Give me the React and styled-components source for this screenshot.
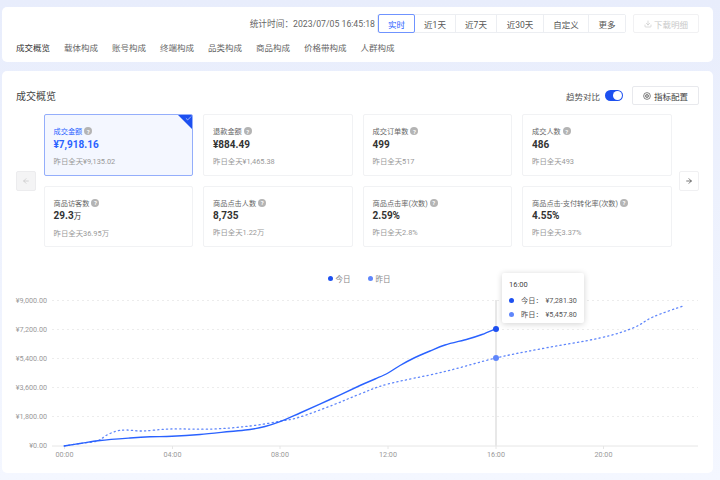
import React from "react"
import styled, { createGlobalStyle } from "styled-components"
import { ArrowLeft, ArrowRight, Check, Download } from "lucide-react"

const FONT = `Roboto, "Noto Sans CJK SC", sans-serif`

const GlobalStyle = createGlobalStyle`
  html, body {
    margin: 0;
    padding: 0;
  }
  body {
    width: 720px;
    height: 480px;
    overflow: hidden;
    font-family: ${FONT};
    background: linear-gradient(180deg, #e8edfc 0%, #f4f7ff 100%);
  }
`

const Page = styled.div`
  display: flex;
  flex-direction: column;
  gap: 9px;
  padding: 7px 7px 0 2px;
`

const Panel = styled.section`
  background: #fff;
  border-radius: 5px;
`

const FilterPanel = styled(Panel)`
  height: 55px;
  padding: 7px 14px 0 14px;
  box-sizing: border-box;
`

const FilterRow = styled.div`
  display: flex;
  align-items: center;
  justify-content: flex-end;
  height: 19px;
`

const StatTime = styled.span`
  font-size: 8.7px;
  color: #666;
  margin-right: 2px;
`

const Segments = styled.div`
  display: flex;
  height: 19px;
  border: 1px solid #eceef2;
  border-radius: 2px;
  box-sizing: border-box;
`

const Segment = styled.button`
  width: ${props => props.$width}px;
  padding: 0;
  margin: ${props => (props.$active ? "-1px 0" : "0")};
  font: 8.5px ${FONT};
  color: ${props => (props.$active ? "#2a62ff" : "#555")};
  background: #fff;
  border: ${props => (props.$active ? "1px solid #6f93ff" : "none")};
  border-right: ${props => (props.$active ? "1px solid #6f93ff" : "1px solid #eceef2")};
  border-radius: ${props => (props.$active ? "2px" : "0")};
  &:last-child {
    border-right: none;
  }
`

const DownloadButton = styled.button`
  display: flex;
  align-items: center;
  justify-content: center;
  gap: 2px;
  width: 66px;
  height: 19px;
  margin-left: 7px;
  padding: 0;
  font: 8.5px ${FONT};
  color: #c9c9c9;
  background: #fff;
  border: 1px solid #f1f1f3;
  border-radius: 2px;
`

const Tabs = styled.nav`
  display: flex;
  gap: 14px;
  margin-top: 9px;
`

const Tab = styled.span`
  font-size: 8.5px;
  line-height: 12px;
  color: ${props => (props.$active ? "#333" : "#666")};
`

const OverviewPanel = styled(Panel)`
  height: 402px;
  padding: 15px 14px 0 14px;
  box-sizing: border-box;
`

const OverviewHead = styled.div`
  display: flex;
  align-items: center;
  justify-content: space-between;
  height: 19px;
`

const Heading = styled.h2`
  margin: 0;
  font-size: 10px;
  font-weight: 400;
  color: #444;
`

const HeadActions = styled.div`
  display: flex;
  align-items: center;
`

const CompareLabel = styled.span`
  font-size: 8.5px;
  color: #555;
`

const Toggle = styled.span`
  display: flex;
  justify-content: flex-end;
  align-items: center;
  width: 18px;
  height: 11px;
  margin: 0 9px 0 5px;
  padding: 1px;
  box-sizing: border-box;
  background: #1d50f0;
  border-radius: 6px;
  &::after {
    content: "";
    width: 9px;
    height: 9px;
    border-radius: 50%;
    background: #fff;
  }
`

const ConfigButton = styled.button`
  display: flex;
  align-items: center;
  justify-content: center;
  gap: 3px;
  width: 67px;
  height: 19px;
  padding: 0;
  font: 8.5px ${FONT};
  color: #444;
  background: #fff;
  border: 1px solid #e8e9ed;
  border-radius: 2px;
`

const Carousel = styled.div`
  display: flex;
  align-items: center;
  gap: 7.5px;
  margin-top: 9px;
`

const ArrowButton = styled.button`
  flex: none;
  display: flex;
  align-items: center;
  justify-content: center;
  width: 20px;
  height: 20px;
  padding: 0;
  color: ${props => (props.disabled ? "#c4c4c4" : "#333")};
  background: ${props => (props.disabled ? "#f4f4f5" : "#fff")};
  border: 1px solid ${props => (props.disabled ? "#ececee" : "#f0f0f2")};
  border-radius: 2px;
`

const MetricGrid = styled.div`
  flex: 1;
  display: grid;
  grid-template-columns: repeat(4, 1fr);
  grid-auto-rows: 61.5px;
  gap: 10px;
`

const MetricCard = styled.div`
  position: relative;
  padding: 11px 9px 0;
  box-sizing: border-box;
  background: ${props => (props.$active ? "#f4f7ff" : "#fff")};
  border: 1px solid ${props => (props.$active ? "#94aefb" : "#f1f2f4")};
  border-radius: 2px;
  overflow: hidden;
`

const CornerMark = styled.span`
  position: absolute;
  top: 0;
  right: 0;
  width: 14px;
  height: 14px;
  background: #1d50f0;
  clip-path: polygon(0 0, 100% 0, 100% 100%);
  color: #fff;
  & svg {
    position: absolute;
    top: 0;
    right: 0;
  }
`

const MetricTitle = styled.div`
  display: flex;
  align-items: center;
  gap: 2px;
  height: 10px;
  font-size: 7.2px;
  white-space: nowrap;
  color: ${props => (props.$active ? "#2a62ff" : "#666")};
`

const HelpDot = styled.span`
  display: inline-flex;
  align-items: center;
  justify-content: center;
  width: 8px;
  height: 8px;
  border-radius: 50%;
  font-size: 6px;
  font-weight: 700;
  color: #fff;
  background: #b4b4b4;
`

const MetricValue = styled.div`
  margin-top: 1.5px;
  font-size: 10px;
  line-height: 14px;
  font-weight: 700;
  color: ${props => (props.$active ? "#2a62ff" : "#333")};
`

const Unit = styled.span`
  font-size: 7.5px;
  font-weight: 400;
`

const MetricCompare = styled.div`
  margin-top: 5px;
  font-size: 7.4px;
  line-height: 10px;
  color: #999;
`

const ChartArea = styled.div`
  position: relative;
  margin: 25px -14px 0 -16px;
`

const Legend = styled.div`
  display: flex;
  justify-content: center;
  gap: 17px;
  height: 12px;
  padding: 1px 0 0 5px;
  box-sizing: border-box;
`

const LegendItem = styled.span`
  display: flex;
  align-items: center;
  gap: 3px;
  font-size: 7.5px;
  color: #888;
`

const Dot = styled.i`
  display: block;
  flex: none;
  width: 5px;
  height: 5px;
  border-radius: 50%;
  background: ${props => props.$color};
`

const Tooltip = styled.div`
  position: absolute;
  left: 502px;
  top: 1px;
  width: 82px;
  height: 50px;
  padding: 6px 7px 0;
  box-sizing: border-box;
  background: #fff;
  border-radius: 2px;
  box-shadow: 0 1px 6px rgba(0, 0, 0, 0.18);
`

const TooltipTime = styled.div`
  font-size: 7.5px;
  line-height: 11px;
  color: #444;
  margin-bottom: 3px;
`

const TooltipRow = styled.div`
  display: flex;
  align-items: center;
  height: 14px;
  font-size: 7.2px;
  color: #555;
  white-space: nowrap;
`

const TooltipLabel = styled.span`
  margin: 0 3px 0 7px;
`

const AxisLabel = styled.text`
  font-family: ${FONT};
  font-size: 7.2px;
  fill: #999;
`

const metrics = [
  { title: "成交金额", value: "¥7,918.16", compare: "昨日全天¥9,135.02", active: true },
  { title: "退款金额", value: "¥884.49", compare: "昨日全天¥1,465.38" },
  { title: "成交订单数", value: "499", compare: "昨日全天517" },
  { title: "成交人数", value: "486", compare: "昨日全天493" },
  { title: "商品访客数", value: "29.3", unit: "万", compare: "昨日全天36.95万" },
  { title: "商品点击人数", value: "8,735", compare: "昨日全天1.22万" },
  { title: "商品点击率(次数)", value: "2.59%", compare: "昨日全天2.8%" },
  { title: "商品点击-支付转化率(次数)", value: "4.55%", compare: "昨日全天3.37%" },
]

const ranges = [
  { label: "实时", width: 37, active: true },
  { label: "近1天", width: 41 },
  { label: "近7天", width: 41 },
  { label: "近30天", width: 47 },
  { label: "自定义", width: 45 },
  { label: "更多", width: 36 },
]

const tabs = ["成交概览", "载体构成", "账号构成", "终端构成", "品类构成", "商品构成", "价格带构成", "人群构成"]

const TODAY = "#1d50f0"
const YESTERDAY = "#5f86fb"

// chart coordinates are page x, and y minus the svg top (284)
const OFFSET_Y = 284

// smooth line through the points (catmull-rom to bezier)
const toPath = list => {
  const pts = list.map(([x, y]) => [x, y - OFFSET_Y])
  let d = `M${pts[0][0]},${pts[0][1]}`
  for (let i = 0; i < pts.length - 1; i++) {
    const p0 = pts[i - 1] || pts[i]
    const p1 = pts[i]
    const p2 = pts[i + 1]
    const p3 = pts[i + 2] || p2
    const c1x = p1[0] + (p2[0] - p0[0]) / 6
    const c1y = p1[1] + (p2[1] - p0[1]) / 6
    const c2x = p2[0] - (p3[0] - p1[0]) / 6
    const c2y = p2[1] - (p3[1] - p1[1]) / 6
    d += ` C${c1x},${c1y} ${c2x},${c2y} ${p2[0]},${p2[1]}`
  }
  return d
}

const todayLine = [
  [64, 446], [80, 443.5], [100, 440.5], [130, 438], [150, 436.8], [172, 436.3], [200, 434.5], [230, 431.5],
  [250, 429.5], [265, 426.5], [280, 421.7], [300, 413], [330, 399.5], [360, 385.5], [375, 379], [388, 373],
  [400, 365.5], [414, 358], [430, 351], [445, 345], [468, 339], [482, 334.5], [496, 328.7],
]

const yesterdayLine = [
  [64, 446], [80, 443.5], [97, 441], [107, 435], [117, 431], [127, 430], [143, 431], [170, 429], [213, 429],
  [250, 426], [280, 421.3], [300, 417], [333, 405], [360, 394], [388, 384], [443, 372], [496, 358], [540, 349],
  [600, 338], [633, 328], [653, 317], [683, 306],
]

const yTicks = [
  { label: "¥9,000.00", y: 300.5 },
  { label: "¥7,200.00", y: 329.5 },
  { label: "¥5,400.00", y: 358.5 },
  { label: "¥3,600.00", y: 387.5 },
  { label: "¥1,800.00", y: 416.5 },
]

const xTicks = [
  { label: "00:00", x: 64.5 },
  { label: "04:00", x: 172.5 },
  { label: "08:00", x: 280 },
  { label: "12:00", x: 388 },
  { label: "16:00", x: 496 },
  { label: "20:00", x: 603.5 },
]

const SettingIcon = () => (
  <svg width="8" height="8" viewBox="0 0 18 18" fill="none" stroke="#555" strokeWidth="1.6">
    <circle cx="9" cy="9" r="7.6" />
    <path d="M9 5.2 12.3 7.1V10.9L9 12.8 5.7 10.9V7.1Z" />
    <circle cx="9" cy="9" r="1" />
  </svg>
)

const TrendChart = () => (
  <svg width="720" height="180" viewBox="0 0 720 180" style={{ display: "block" }}>
    {yTicks.map(tick => (
      <g key={tick.label}>
        <AxisLabel x="47" y={tick.y - OFFSET_Y + 2.5} textAnchor="end">{tick.label}</AxisLabel>
        <line x1="52" x2="698" y1={tick.y - OFFSET_Y} y2={tick.y - OFFSET_Y} stroke="#ececec" strokeDasharray="2 3" />
      </g>
    ))}
    <AxisLabel x="47" y={448 - OFFSET_Y} textAnchor="end">¥0.00</AxisLabel>
    <line x1="52" x2="698" y1={446 - OFFSET_Y} y2={446 - OFFSET_Y} stroke="#e6e6e6" />
    {xTicks.map(tick => (
      <g key={tick.label}>
        <line x1={tick.x} x2={tick.x} y1={446 - OFFSET_Y} y2={449 - OFFSET_Y} stroke="#e6e6e6" />
        <AxisLabel x={tick.x} y={456.5 - OFFSET_Y} textAnchor="middle">{tick.label}</AxisLabel>
      </g>
    ))}
    <line x1="496" x2="496" y1={300 - OFFSET_Y} y2={446 - OFFSET_Y} stroke="#e8e8e8" strokeWidth="2" />
    <path d={toPath(yesterdayLine)} fill="none" stroke={YESTERDAY} strokeWidth="1.3" strokeDasharray="1.2 3.2" strokeLinecap="round" />
    <path d={toPath(todayLine)} fill="none" stroke="#2a62ff" strokeWidth="1.4" />
    <circle cx="496" cy={329 - OFFSET_Y} r="3" fill={TODAY} />
    <circle cx="496" cy={358 - OFFSET_Y} r="3" fill={YESTERDAY} />
  </svg>
)

const App = () => (
  <>
    <GlobalStyle />
    <Page>
      <FilterPanel>
        <FilterRow>
          <StatTime>统计时间：2023/07/05 16:45:18</StatTime>
          <Segments>
            {ranges.map(range => (
              <Segment key={range.label} $width={range.width} $active={range.active}>{range.label}</Segment>
            ))}
          </Segments>
          <DownloadButton disabled>
            <Download size={8} />
            下载明细
          </DownloadButton>
        </FilterRow>
        <Tabs>
          {tabs.map((tab, idx) => (
            <Tab key={tab} $active={idx === 0}>{tab}</Tab>
          ))}
        </Tabs>
      </FilterPanel>

      <OverviewPanel>
        <OverviewHead>
          <Heading>成交概览</Heading>
          <HeadActions>
            <CompareLabel>趋势对比</CompareLabel>
            <Toggle />
            <ConfigButton>
              <SettingIcon />
              指标配置
            </ConfigButton>
          </HeadActions>
        </OverviewHead>

        <Carousel>
          <ArrowButton disabled>
            <ArrowLeft size={8} />
          </ArrowButton>
          <MetricGrid>
            {metrics.map(metric => (
              <MetricCard key={metric.title} $active={metric.active}>
                {metric.active && (
                  <CornerMark>
                    <Check size={7} strokeWidth={2} />
                  </CornerMark>
                )}
                <MetricTitle $active={metric.active}>
                  {metric.title}
                  <HelpDot>?</HelpDot>
                </MetricTitle>
                <MetricValue $active={metric.active}>
                  {metric.value}
                  {metric.unit && <Unit>{metric.unit}</Unit>}
                </MetricValue>
                <MetricCompare>{metric.compare}</MetricCompare>
              </MetricCard>
            ))}
          </MetricGrid>
          <ArrowButton>
            <ArrowRight size={8} />
          </ArrowButton>
        </Carousel>

        <ChartArea>
          <Legend>
            <LegendItem><Dot $color={TODAY} />今日</LegendItem>
            <LegendItem><Dot $color={YESTERDAY} />昨日</LegendItem>
          </Legend>
          <TrendChart />
          <Tooltip>
            <TooltipTime>16:00</TooltipTime>
            <TooltipRow><Dot $color={TODAY} /><TooltipLabel>今日：</TooltipLabel>¥7,281.30</TooltipRow>
            <TooltipRow><Dot $color={YESTERDAY} /><TooltipLabel>昨日：</TooltipLabel>¥5,457.80</TooltipRow>
          </Tooltip>
        </ChartArea>
      </OverviewPanel>
    </Page>
  </>
)

export default App
